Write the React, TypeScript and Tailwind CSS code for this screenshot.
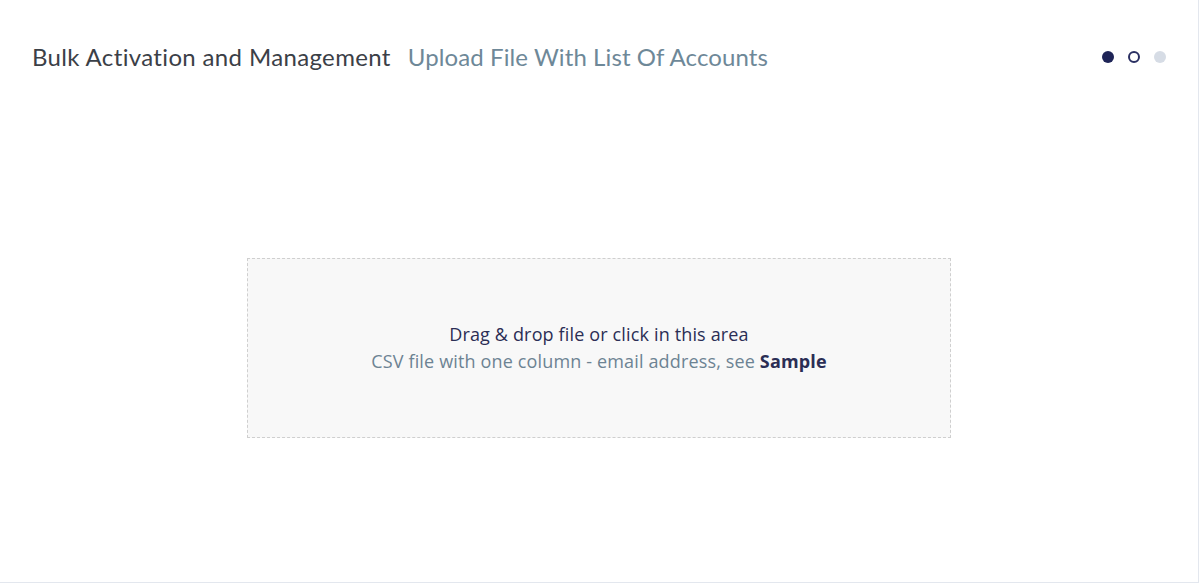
export default function App() {
  return (
    <div className="w-[1200px] h-[584px] bg-white">
      <div className="w-[1199px] h-[583px] border-r border-b border-[#e3e7ee] bg-white flex flex-col">
        <div className="h-[114px] flex items-center justify-between pl-[32px] pr-[32px]">
          <div className="flex items-baseline gap-[17px] text-[24px] leading-none" style={{ fontFamily: "Lato, 'Noto Sans', sans-serif" }}>
            <span className="text-[#3b4047] tracking-[0.35px]">Bulk Activation and Management</span>
            <span className="text-[#6e8898] tracking-[0.1px]">Upload File With List Of Accounts</span>
          </div>
          <div className="flex items-center gap-[14px]">
            <span className="w-[12px] h-[12px] rounded-full bg-[#1e2457]" />
            <span className="w-[12px] h-[12px] rounded-full border-[2px] border-[#2a2f62] bg-white" />
            <span className="w-[12px] h-[12px] rounded-full bg-[#d6dce5]" />
          </div>
        </div>
        <div className="flex justify-center mt-[144px]">
          <div
            className="w-[704px] h-[180px] bg-[#f8f8f8] border border-dashed border-[#cfcfcf] flex flex-col items-center justify-center leading-[27px] text-[18px] tracking-[0.15px]"
            style={{ fontFamily: "'Open Sans', sans-serif" }}
          >
            <div className="text-[#2b2e55]">Drag &amp; drop file or click in this area</div>
            <div className="text-[#6d8393]">
              CSV file with one column - email address, see <span className="font-bold text-[#2b2e55]">Sample</span>
            </div>
          </div>
        </div>
      </div>
    </div>
  );
}
